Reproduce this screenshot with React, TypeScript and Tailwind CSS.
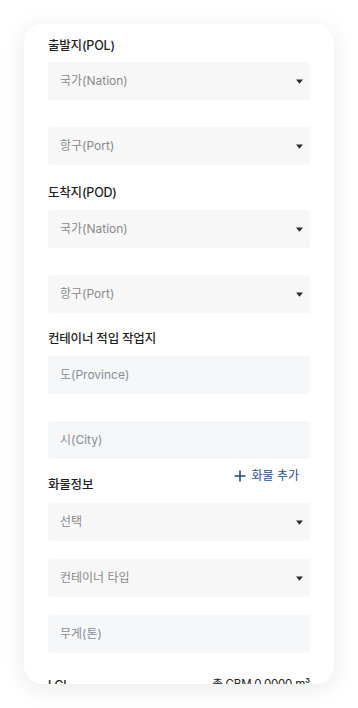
import React from "react";

const font = { fontFamily: '"Inter", "Noto Sans CJK KR", sans-serif' };

function Caret() {
  return (
    <svg width="7" height="5" viewBox="0 0 7 5" className="shrink-0">
      <path d="M0 0.5 H7 L3.5 4.8 Z" fill="#2b2b2b" />
    </svg>
  );
}

function SelectBox({ text, className = "" }: { text: string; className?: string }) {
  return (
    <div className={`h-[38px] rounded-[3px] bg-[#f7f7f8] flex items-center justify-between pl-3 pr-[7px] ${className}`}>
      <span className="text-[12px] text-[#8a8a8a]">{text}</span>
      <Caret />
    </div>
  );
}

function InputBox({ text, className = "" }: { text: string; className?: string }) {
  return (
    <div className={`h-[38px] rounded-[3px] bg-[#f6f7f9] flex items-center pl-3 ${className}`}>
      <span className="text-[12px] text-[#878d98]">{text}</span>
    </div>
  );
}

function Label({ text, className = "" }: { text: string; className?: string }) {
  return (
    <div className={`h-[20px] flex items-center text-[12.5px] font-medium text-[#1f1f1f] tracking-[-0.2px] ${className}`}>
      {text}
    </div>
  );
}

export default function App() {
  return (
    <div className="w-[358px] h-[708px] bg-white p-6" style={font}>
      <div className="w-[310px] h-[660px] rounded-[18px] bg-white overflow-hidden shadow-[0_4px_24px_rgba(0,0,0,0.09)] px-6 pt-3">
        <Label text="출발지(POL)" />
        <SelectBox text="국가(Nation)" className="mt-[6px]" />
        <SelectBox text="항구(Port)" className="mt-[27px]" />

        <Label text="도착지(POD)" className="mt-[18px]" />
        <SelectBox text="국가(Nation)" className="mt-[7px]" />
        <SelectBox text="항구(Port)" className="mt-[27px]" />

        <Label text="컨테이너 적입 작업지" className="mt-[16px]" />
        <InputBox text="도(Province)" className="mt-[7px]" />
        <InputBox text="시(City)" className="mt-[27px]" />

        <div className="mt-[8px] flex items-end justify-between">
          <Label text="화물정보" />
          <button className="flex items-center gap-[5px] pr-[11px] mb-[10px] text-[12px] text-[#1f4e8c]">
            <svg width="12" height="12" viewBox="0 0 12 12">
              <path d="M6 0.5 V11.5 M0.5 6 H11.5" stroke="#1f4e8c" strokeWidth="1.6" />
            </svg>
            <span>화물 추가</span>
          </button>
        </div>
        <SelectBox text="선택" className="mt-[8px]" />
        <SelectBox text="컨테이너 타입" className="mt-[18px]" />
        <InputBox text="무게(톤)" className="mt-[18px]" />

        <div className="mt-[23px] flex items-center justify-between text-[12px] text-[#222]">
          <span className="font-medium">LCL</span>
          <span className="text-[11.5px] tracking-[-0.2px]">총 CBM 0.0000 m³</span>
        </div>
      </div>
    </div>
  );
}
